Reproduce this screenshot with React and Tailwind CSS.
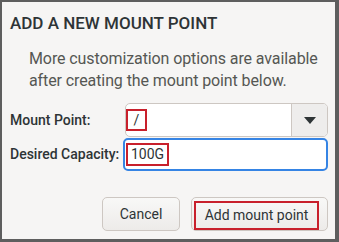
export default function App() {
  return (
    <div
      className="h-[242px] w-[339px] overflow-hidden bg-[#5e5e5e] pb-[3px] pl-[2px] pr-[4px] pt-[2px] text-[#2e3436]"
      style={{ fontFamily: 'Roboto, "Noto Sans", sans-serif' }}
    >
      <div className="flex h-full flex-col bg-[#f6f5f4]">
        <h1 className="ml-[8px] mt-[10px] text-[17px] font-medium leading-[22px]">
          ADD A NEW MOUNT POINT
        </h1>
        <p className="ml-[27px] mt-[14px] text-[16px] leading-[22px] tracking-[-0.1px] text-[#555753]">
          More customization options are available
          <br />
          after creating the mount point below.
        </p>

        <div className="mt-[11px] flex flex-col gap-[1px] pr-[7px]">
          <div className="flex items-center">
            <span className="w-[123px] whitespace-nowrap pl-[8px] text-[14px] font-medium">
              Mount Point:
            </span>
            <div className="flex h-[34px] flex-1 rounded-[5px] border border-[#cdc7c2] bg-white">
              <div className="flex flex-1 items-center pl-[0px]">
                <span className="flex h-[22px] w-[21px] items-center justify-center border-2 border-[#c8202c] text-[14px]">
                  /
                </span>
              </div>
              <div className="flex w-[36px] items-center justify-center rounded-r-[4px] border-l border-[#cdc7c2] bg-[#eeedec]">
                <svg width="12" height="7" viewBox="0 0 12 7">
                  <path d="M0 0 H12 L6 7 Z" fill="#2e3436" />
                </svg>
              </div>
            </div>
          </div>
          <div className="flex items-center">
            <span className="w-[121px] whitespace-nowrap pl-[8px] text-[14px] font-medium">
              Desired Capacity:
            </span>
            <div className="flex h-[33px] flex-1 items-center rounded-[5px] border-2 border-[#3584e4] bg-white pl-[1px]">
              <span className="flex h-[23px] items-center border-2 border-[#c8202c] px-[3px] text-[14px]">
                100G
              </span>
            </div>
          </div>
        </div>

        <div className="mt-[26px] flex justify-end gap-[11px] pr-[7px]">
          <button className="h-[34px] w-[78px] rounded-[5px] border border-[#cdc7c2] bg-gradient-to-b from-[#f8f8f7] to-[#edebe9] text-[14px]">
            Cancel
          </button>
          <button className="flex h-[34px] w-[137px] items-end rounded-[5px] border border-[#cdc7c2] bg-gradient-to-b from-[#f8f8f7] to-[#edebe9] pl-[2px] text-[14px]">
            <span className="flex h-[29px] w-[125px] items-center justify-center border-2 border-[#c8202c]">
              Add mount point
            </span>
          </button>
        </div>
      </div>
    </div>
  );
}
